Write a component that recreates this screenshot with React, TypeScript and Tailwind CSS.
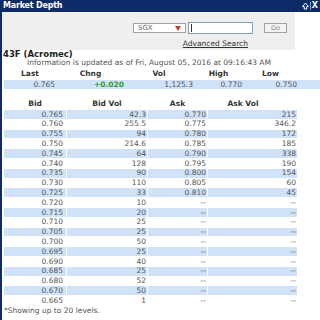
import React from 'react'

const bids = [
  ['0.765', '42.3', '0.770', '215'],
  ['0.760', '255.5', '0.775', '346.2'],
  ['0.755', '94', '0.780', '172'],
  ['0.750', '214.6', '0.785', '185'],
  ['0.745', '64', '0.790', '338'],
  ['0.740', '128', '0.795', '190'],
  ['0.735', '90', '0.800', '154'],
  ['0.730', '110', '0.805', '60'],
  ['0.725', '33', '0.810', '45'],
  ['0.720', '10', '--', '--'],
  ['0.715', '20', '--', '--'],
  ['0.710', '25', '--', '--'],
  ['0.705', '25', '--', '--'],
  ['0.700', '50', '--', '--'],
  ['0.695', '25', '--', '--'],
  ['0.690', '40', '--', '--'],
  ['0.685', '25', '--', '--'],
  ['0.680', '52', '--', '--'],
  ['0.670', '50', '--', '--'],
  ['0.665', '1', '--', '--'],
]

export default function App() {
  return (
    <div className="w-[320px] h-[320px] overflow-hidden bg-white flex flex-col font-['DejaVu_Sans',sans-serif] text-[7.5px] text-[#555]">
      {/* Title bar */}
      <div className="h-[12px] bg-[#0d2b66] flex items-center justify-between pl-[3px] pr-[2px] shrink-0">
        <span className="text-white font-bold text-[8px] leading-none tracking-[-0.2px]">Market Depth</span>
        <div className="flex items-center gap-[1px]">
          <svg width="7" height="8" viewBox="0 0 7 8">
            <path d="M3.5 1 L6.5 4.5 L4.8 4.5 L4.8 7 L2.2 7 L2.2 4.5 L0.5 4.5 Z" fill="none" stroke="#fff" strokeWidth="1" />
          </svg>
          <span className="w-px h-[8px] bg-[#8fa3c8]" />
          <span className="text-white font-bold text-[8px] leading-none">X</span>
        </div>
      </div>

      <div className="flex-1 border-l-2 border-[#0d2b66] flex flex-col">
        {/* Search panel */}
        <div className="w-[293px] h-[38px] bg-[#efefef] flex flex-col items-end pt-[10px] pr-[8px] shrink-0">
          <div className="flex items-center">
            <div className="w-[53px] h-[10px] bg-white border border-[#a0a0a0] flex items-center justify-between pl-[4px] pr-[4px]">
              <span className="text-[7px] leading-none text-[#666]">SGX</span>
              <span className="w-0 h-0 border-l-[3px] border-r-[3px] border-t-[5px] border-l-transparent border-r-transparent border-t-[#c0392b]" />
            </div>
            <div className="w-[65px] h-[12px] ml-[2px] bg-white border border-[#7f9db9] flex items-center pl-[2px]">
              <span className="w-px h-[8px] bg-[#333]" />
            </div>
            <div className="w-[23px] h-[10px] ml-[11px] bg-[#f4f4f4] border border-[#a0a0a0] flex items-center justify-center">
              <span className="text-[6.5px] leading-none text-[#888]">Go</span>
            </div>
          </div>
          <span className="mt-[6px] mr-[39px] underline text-[#333] leading-[8px]">Advanced Search</span>
        </div>

        {/* Stock name and info */}
        <div className="h-[8px] pl-[1px] flex items-center font-bold text-[8.5px] text-[#222] leading-none">43F (Acromec)</div>
        <div className="h-[9px] w-[294px] flex items-center justify-center leading-none">
          Information is updated as of Fri, August 05, 2016 at 09:16:43 AM
        </div>

        {/* Summary */}
        <div className="pl-[2px] flex flex-col">
          <div className="h-[12px] pt-[2px] flex items-center font-bold text-[#333] leading-none">
            <div className="w-[52px] text-center">Last</div>
            <div className="w-[69px] text-center">Chng</div>
            <div className="w-[68px] text-center">Vol</div>
            <div className="w-[51px] text-center">High</div>
            <div className="w-[53px] text-center">Low</div>
          </div>
          <div className="h-[9px] mt-px flex items-center bg-[#cfe2f8] leading-none">
            <div className="w-[52px] text-right pr-[1px]">0.765</div>
            <div className="w-[69px] text-right pr-[1px] font-bold text-[#2e9a2e]">+0.020</div>
            <div className="w-[68px] text-right">1,125.3</div>
            <div className="w-[51px] text-right pr-[2px]">0.770</div>
            <div className="w-[53px] text-right">0.750</div>
          </div>
        </div>

        {/* Depth */}
        <div className="pl-[2px] mt-[10px] flex flex-col">
          <div className="h-[10px] mb-px flex items-center gap-px font-bold text-[#333] leading-none">
            <div className="w-[62px] text-center">Bid</div>
            <div className="w-[80px] text-center">Bid Vol</div>
            <div className="w-[59px] text-center">Ask</div>
            <div className="w-[89px] text-center pr-[19px]">Ask Vol</div>
          </div>
          {bids.map((r, i) => (
            <div
              key={i}
              className={`h-[8.8px] mb-px flex items-center gap-px leading-none ${i % 2 === 0 ? 'bg-white' : ''}`}
            >
              <div className={`w-[62px] h-full flex items-center justify-end pr-[3px] ${i % 2 === 0 ? 'bg-[#cfe2f8]' : ''}`}>{r[0]}</div>
              <div className={`w-[80px] h-full flex items-center justify-end pr-px ${i % 2 === 0 ? 'bg-[#cfe2f8]' : ''}`}>{r[1]}</div>
              <div className={`w-[59px] h-full flex items-center justify-end pr-px ${i % 2 === 0 ? 'bg-[#cfe2f8]' : ''}`}>{r[2]}</div>
              <div className={`w-[89px] h-full flex items-center justify-end pr-px ${i % 2 === 0 ? 'bg-[#cfe2f8]' : ''}`}>{r[3]}</div>
            </div>
          ))}
        </div>

        <div className="pl-[2px] h-[9px] flex items-center leading-none">*Showing up to 20 levels.</div>
      </div>
    </div>
  )
}
